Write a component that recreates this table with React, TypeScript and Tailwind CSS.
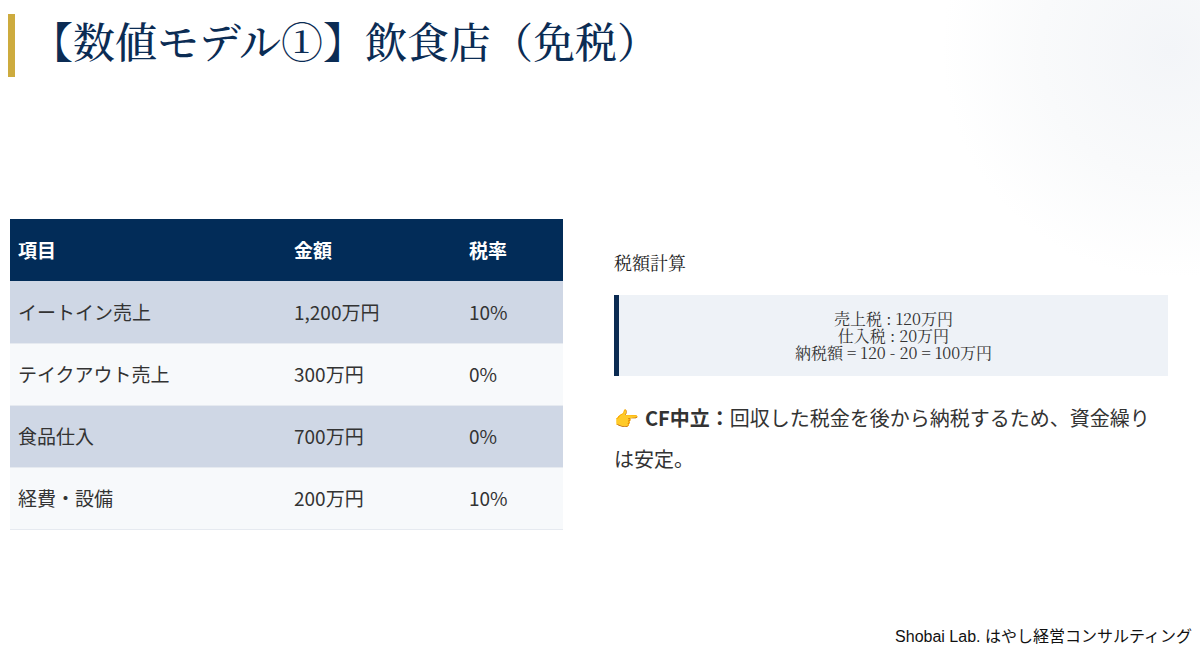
import React from "react";

const rows = [
  { item: "イートイン売上", amount: "1,200万円", rate: "10%" },
  { item: "テイクアウト売上", amount: "300万円", rate: "0%" },
  { item: "食品仕入", amount: "700万円", rate: "0%" },
  { item: "経費・設備", amount: "200万円", rate: "10%" },
];

export default function App() {
  return (
    <div className="relative w-[1200px] h-[657px] overflow-hidden bg-white font-['Noto_Sans_CJK_JP','Noto_Sans',sans-serif] text-[#222]">
      {/* faint glow in the top-right corner */}
      <div className="absolute right-[-200px] top-[-180px] w-[460px] h-[460px] rounded-full bg-[radial-gradient(circle,#f3f5f8_0%,#f9fafb_40%,rgba(255,255,255,0)_70%)]" />

      <div className="relative flex items-start gap-[16px] pl-[8px] pt-[14px]">
        <div className="w-[7px] h-[63px] bg-[#cdab3e]" />
        <h1 className="mt-[1px] text-[42px] leading-[50px] text-[#0b2c54] font-['Noto_Serif_CJK_JP',serif] font-medium">
          【数値モデル①】飲食店（免税）
        </h1>
      </div>

      <div className="relative grid grid-cols-[553px_554px] gap-[51px] pl-[10px] mt-[142px]">
        <table className="w-[553px] border-collapse text-[19px] self-start">
          <thead>
            <tr className="bg-[#022c58] text-white h-[62px]">
              <th className="w-[276px] text-left font-bold pl-[8px]">項目</th>
              <th className="w-[175px] text-left font-bold pl-[8px]">金額</th>
              <th className="text-left font-bold pl-[8px]">税率</th>
            </tr>
          </thead>
          <tbody>
            {rows.map((r, i) => (
              <tr
                key={r.item}
                className={`h-[62px] border-b-[1px] border-[#e6eaf0] ${i % 2 === 0 ? "bg-[#cfd7e5]" : "bg-[#f7f9fb]"}`}
              >
                <td className="pl-[8px] text-[#333]">{r.item}</td>
                <td className="pl-[8px] text-[#333]">{r.amount}</td>
                <td className="pl-[8px] text-[#333]">{r.rate}</td>
              </tr>
            ))}
          </tbody>
        </table>

        <div className="flex flex-col pt-[30px]">
          <p className="text-[18px] leading-[26px] text-[#222] font-['Noto_Serif_CJK_JP',serif]">税額計算</p>
          <div className="mt-[20px] h-[81px] border-l-[5px] border-[#0b2b52] bg-[#eef2f7] flex flex-col items-center justify-center text-[16px] leading-[17px] text-[#333] font-['Noto_Serif_CJK_JP',serif]">
            <span>売上税 : 120万円</span>
            <span>仕入税 : 20万円</span>
            <span>納税額 = 120 - 20 = 100万円</span>
          </div>
          <p className="mt-[22px] w-[540px] text-[20px] leading-[40px] text-[#333]">
            <span className="mr-[6px] font-['Noto_Color_Emoji',sans-serif]">👉</span>
            <span className="font-bold">CF中立：</span>回収した税金を後から納税するため、資金繰りは安定。
          </p>
        </div>
      </div>

      <div className="absolute right-[8px] bottom-[8px] text-[16px] text-[#111] font-['Liberation_Sans','Noto_Sans_CJK_JP',sans-serif]">
        Shobai Lab. はやし経営コンサルティング
      </div>
    </div>
  );
}
